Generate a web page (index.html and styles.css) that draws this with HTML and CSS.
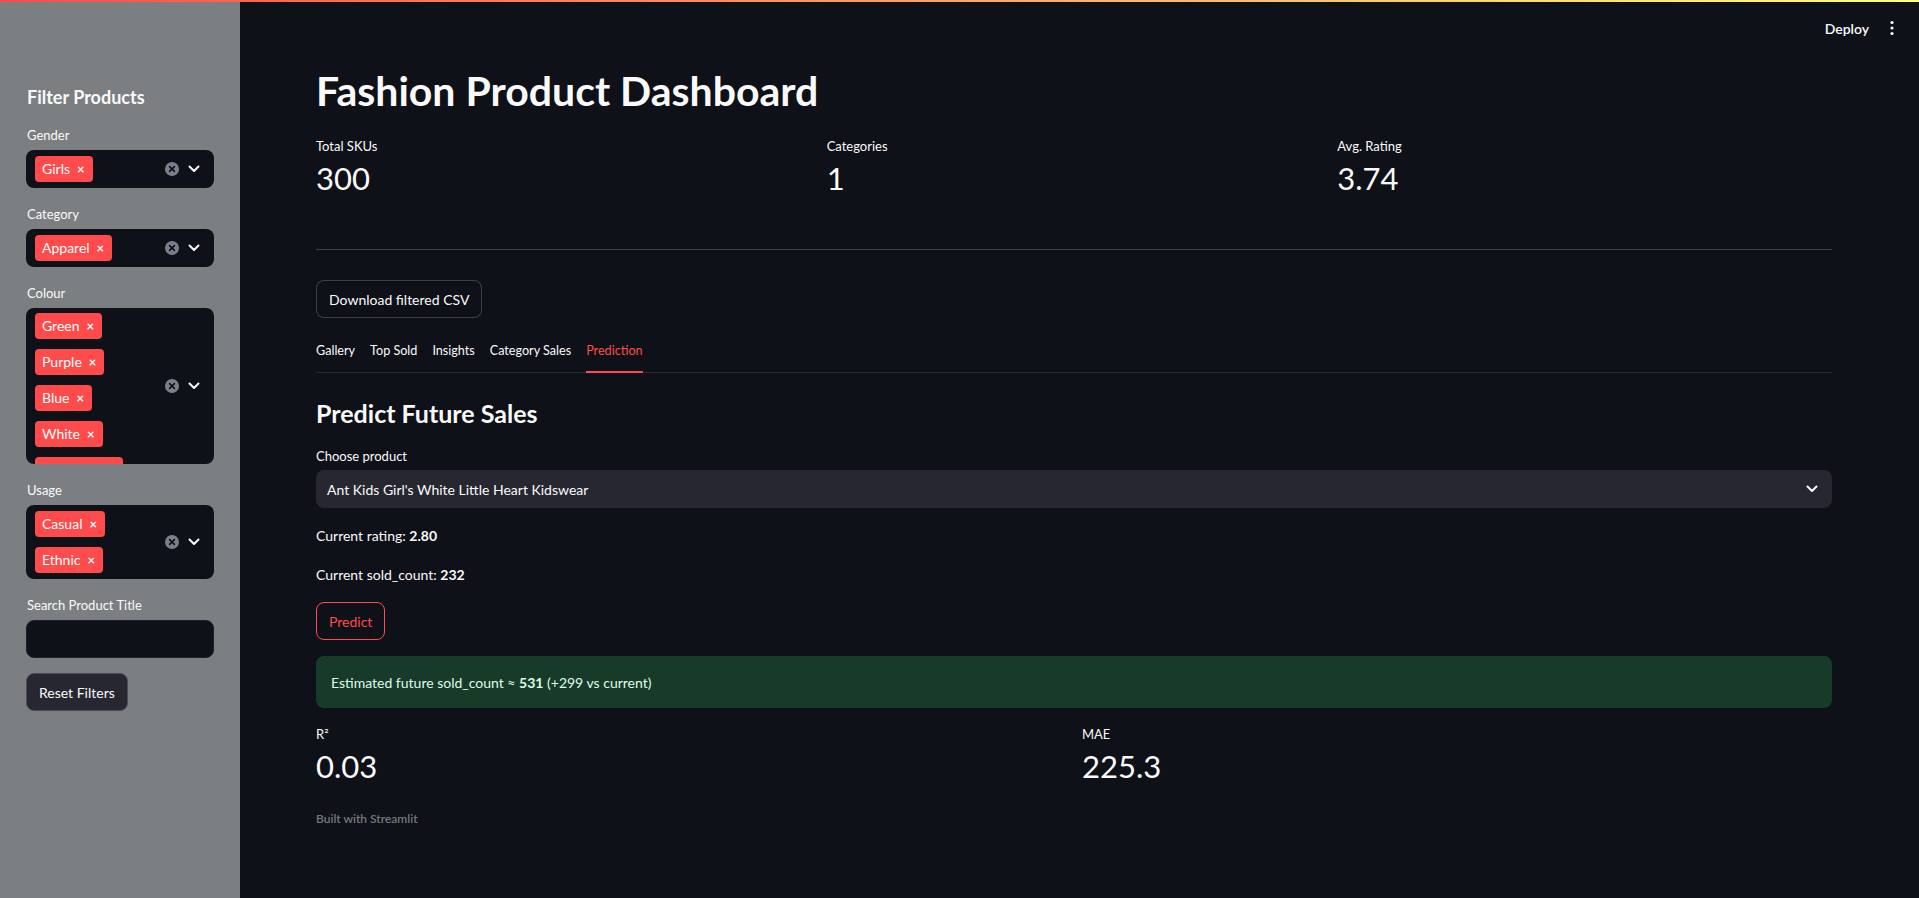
FILE: index.html
```html
<!DOCTYPE html>
<html lang="en">
<head>
<meta charset="utf-8">
<title>Fashion Product Dashboard</title>
<link rel="stylesheet" href="styles.css">
</head>
<body>
<div class="decoration"></div>
<div class="app">
  <aside class="sidebar">
    <h2 class="side-title">Filter Products</h2>

    <div class="field">
      <label class="lbl">Gender</label>
      <div class="multi">
        <div class="tags">
          <span class="tag">Girls <span class="tx">×</span></span>
        </div>
        <div class="ctrls">
          <span class="clear"><svg viewBox="0 0 14 14" width="14" height="14"><circle cx="7" cy="7" r="7" fill="#7d7e8b"/><path d="M4.6 4.6 9.4 9.4M9.4 4.6 4.6 9.4" stroke="#0e1117" stroke-width="1.6" stroke-linecap="round"/></svg></span>
          <span class="chev"><svg viewBox="0 0 12 8" width="12" height="8"><path d="M1.5 1.5 6 6 10.5 1.5" fill="none" stroke="#fafafa" stroke-width="2" stroke-linecap="round" stroke-linejoin="round"/></svg></span>
        </div>
      </div>
    </div>

    <div class="field">
      <label class="lbl">Category</label>
      <div class="multi">
        <div class="tags">
          <span class="tag">Apparel <span class="tx">×</span></span>
        </div>
        <div class="ctrls">
          <span class="clear"><svg viewBox="0 0 14 14" width="14" height="14"><circle cx="7" cy="7" r="7" fill="#7d7e8b"/><path d="M4.6 4.6 9.4 9.4M9.4 4.6 4.6 9.4" stroke="#0e1117" stroke-width="1.6" stroke-linecap="round"/></svg></span>
          <span class="chev"><svg viewBox="0 0 12 8" width="12" height="8"><path d="M1.5 1.5 6 6 10.5 1.5" fill="none" stroke="#fafafa" stroke-width="2" stroke-linecap="round" stroke-linejoin="round"/></svg></span>
        </div>
      </div>
    </div>

    <div class="field">
      <label class="lbl">Colour</label>
      <div class="multi multi-clip">
        <div class="tags">
          <span class="tag">Green <span class="tx">×</span></span>
          <span class="tag">Purple <span class="tx">×</span></span>
          <span class="tag">Blue <span class="tx">×</span></span>
          <span class="tag">White <span class="tx">×</span></span>
          <span class="tag tag-hidden"></span>
        </div>
        <div class="ctrls">
          <span class="clear"><svg viewBox="0 0 14 14" width="14" height="14"><circle cx="7" cy="7" r="7" fill="#7d7e8b"/><path d="M4.6 4.6 9.4 9.4M9.4 4.6 4.6 9.4" stroke="#0e1117" stroke-width="1.6" stroke-linecap="round"/></svg></span>
          <span class="chev"><svg viewBox="0 0 12 8" width="12" height="8"><path d="M1.5 1.5 6 6 10.5 1.5" fill="none" stroke="#fafafa" stroke-width="2" stroke-linecap="round" stroke-linejoin="round"/></svg></span>
        </div>
      </div>
    </div>

    <div class="field">
      <label class="lbl">Usage</label>
      <div class="multi">
        <div class="tags">
          <span class="tag">Casual <span class="tx">×</span></span>
          <span class="tag">Ethnic <span class="tx">×</span></span>
        </div>
        <div class="ctrls">
          <span class="clear"><svg viewBox="0 0 14 14" width="14" height="14"><circle cx="7" cy="7" r="7" fill="#7d7e8b"/><path d="M4.6 4.6 9.4 9.4M9.4 4.6 4.6 9.4" stroke="#0e1117" stroke-width="1.6" stroke-linecap="round"/></svg></span>
          <span class="chev"><svg viewBox="0 0 12 8" width="12" height="8"><path d="M1.5 1.5 6 6 10.5 1.5" fill="none" stroke="#fafafa" stroke-width="2" stroke-linecap="round" stroke-linejoin="round"/></svg></span>
        </div>
      </div>
    </div>

    <div class="field">
      <label class="lbl">Search Product Title</label>
      <div class="text-input"></div>
    </div>

    <button class="reset-btn">Reset Filters</button>
  </aside>

  <main class="main">
    <header class="header">
      <span class="deploy">Deploy</span>
      <span class="menu"><svg viewBox="0 0 4 16" width="4" height="16"><circle cx="2" cy="2.5" r="1.6" fill="#fafafa"/><circle cx="2" cy="8" r="1.6" fill="#fafafa"/><circle cx="2" cy="13.5" r="1.6" fill="#fafafa"/></svg></span>
    </header>

    <div class="content">
      <h1 class="title">Fashion Product Dashboard</h1>

      <div class="metrics three">
        <div class="metric"><div class="m-label">Total SKUs</div><div class="m-value">300</div></div>
        <div class="metric"><div class="m-label">Categories</div><div class="m-value">1</div></div>
        <div class="metric"><div class="m-label">Avg. Rating</div><div class="m-value">3.74</div></div>
      </div>

      <hr class="divider">

      <button class="dl-btn">Download filtered CSV</button>

      <nav class="tabs">
        <span class="tab">Gallery</span>
        <span class="tab">Top Sold</span>
        <span class="tab">Insights</span>
        <span class="tab">Category Sales</span>
        <span class="tab active">Prediction</span>
      </nav>

      <h3 class="subhead">Predict Future Sales</h3>

      <label class="main-lbl">Choose product</label>
      <div class="select">
        <span>Ant Kids Girl's White Little Heart Kidswear</span>
        <svg viewBox="0 0 12 8" width="12" height="8"><path d="M1.5 1.5 6 6 10.5 1.5" fill="none" stroke="#fafafa" stroke-width="2" stroke-linecap="round" stroke-linejoin="round"/></svg>
      </div>

      <p class="para">Current rating: <b>2.80</b></p>
      <p class="para">Current sold_count: <b>232</b></p>

      <button class="predict-btn">Predict</button>

      <div class="success"><span>Estimated future sold_count ≈ <b>531</b> (+299 vs current)</span></div>

      <div class="metrics two">
        <div class="metric"><div class="m-label">R²</div><div class="m-value">0.03</div></div>
        <div class="metric"><div class="m-label">MAE</div><div class="m-value">225.3</div></div>
      </div>

      <p class="footer">Built with Streamlit</p>
    </div>
  </main>
</div>
</body>
</html>
```

FILE: styles.css
```css
* { box-sizing: border-box; }
html, body { margin: 0; padding: 0; }
body {
  background: #0e1117;
  color: #fafafa;
  font-family: "Source Sans Pro", Lato, "Noto Sans", sans-serif;
  font-size: 14px;
  width: 1919px;
  height: 898px;
  overflow: hidden;
}
.decoration {
  position: absolute;
  top: 0; left: 0; right: 0;
  height: 2px;
  background: linear-gradient(90deg, #ff4b4b, #fffd80);
  z-index: 5;
}
.app { display: flex; height: 898px; }

/* Sidebar */
.sidebar {
  width: 240px;
  flex: none;
  background: #7b7f82;
  padding: 85px 26px 0 26px;
  display: flex;
  flex-direction: column;
}
.side-title {
  margin: 0 0 16px 1px;
  font-size: 18px;
  font-weight: 700;
  line-height: 24px;
  color: #fafafa;
}
.field { display: flex; flex-direction: column; margin-bottom: 16px; }
.lbl {
  font-size: 13px;
  line-height: 20px;
  margin: 0 0 5px 1px;
  color: #fafafa;
}
.multi {
  background: #0e1117;
  border-radius: 8px;
  display: flex;
  align-items: center;
  padding: 6px 14px 6px 9px;
}
.multi-clip { height: 156px; overflow: hidden; align-items: flex-start; }
.multi-clip .ctrls { align-self: center; }
.tags { flex: 1; display: flex; flex-direction: column; align-items: flex-start; gap: 10px; }
.multi-clip .tags { margin-top: -1px; }
.tag {
  background: #ff4b4b;
  color: #fff;
  border-radius: 4px;
  height: 26px;
  line-height: 26px;
  padding: 0 8px 0 7px;
  font-size: 14px;
  display: inline-flex;
  align-items: center;
}
.tag-hidden { width: 88px; }
.tx { font-size: 13px; margin-left: 7px; font-weight: 700; }
.ctrls { display: flex; align-items: center; gap: 9px; }
.clear, .chev { display: flex; align-items: center; }
.text-input {
  height: 38px;
  background: #0e1117;
  border-radius: 8px;
  border: 1px solid #1d2027;
}
.reset-btn {
  align-self: flex-start;
  height: 38px;
  padding: 0 12px;
  background: #262730;
  border: 1px solid #4a4c55;
  border-radius: 8px;
  color: #fafafa;
  font: inherit;
  font-size: 14px;
  margin-top: -1px;
}

/* Main */
.main { flex: 1; display: flex; flex-direction: column; }
.header {
  height: 56px;
  display: flex;
  justify-content: flex-end;
  align-items: center;
  padding-right: 25px;
  gap: 21px;
}
.deploy { font-size: 14px; font-weight: 600; }
.menu { display: flex; }
.content { padding: 0 87px 0 76px; display: flex; flex-direction: column; }
.title {
  margin: 8px 0 0 0;
  font-size: 41px;
  line-height: 54px;
  font-weight: 700;
}
.metrics { display: grid; gap: 16px; }
.three { grid-template-columns: repeat(3, 1fr); margin-top: 18px; }
.two { grid-template-columns: repeat(2, 1fr); margin-top: 16px; }
.m-label { font-size: 13px; line-height: 20px; }
.m-value { font-size: 31px; line-height: 44px; }
.divider {
  border: none;
  border-top: 1px solid rgba(250,250,250,0.2);
  margin: 49px 0 30px 0;
}
.dl-btn, .predict-btn {
  align-self: flex-start;
  height: 38px;
  padding: 0 12px;
  background: #0e1117;
  border: 1px solid rgba(250,250,250,0.2);
  border-radius: 8px;
  color: #fafafa;
  font: inherit;
  font-size: 14px;
}
.tabs {
  display: flex;
  gap: 15px;
  margin-top: 23px;
  border-bottom: 1px solid rgba(250,250,250,0.12);
}
.tab { font-size: 12.6px; line-height: 20px; padding-bottom: 10px; border-bottom: 2px solid transparent; margin-bottom: -1px; }
.tab.active { color: #ff4b4b; border-bottom-color: #ff4b4b; }
.subhead {
  margin: 22px 0 0 0;
  font-size: 25px;
  line-height: 36px;
  font-weight: 700;
}
.main-lbl { font-size: 13px; line-height: 20px; margin-top: 15px; }
.select {
  margin-top: 4px;
  height: 38px;
  background: #262730;
  border-radius: 8px;
  display: flex;
  align-items: center;
  justify-content: space-between;
  padding: 0 14px 0 11px;
  font-size: 14px;
}
.para { margin: 17px 0 0 0; font-size: 14px; line-height: 22px; }
.para + .para { margin-top: 17px; }
.predict-btn { color: #ff4b4b; border-color: #ff4b4b; margin-top: 16px; }
.success {
  margin-top: 16px;
  height: 52px;
  background: #183a29;
  border-radius: 8px;
  display: flex;
  align-items: center;
  padding: 0 15px;
  color: #dffde9;
  font-size: 14px;
}
.footer { margin: 23px 0 0 0; font-size: 12px; font-weight: 600; color: rgba(250,250,250,0.45); }
```
